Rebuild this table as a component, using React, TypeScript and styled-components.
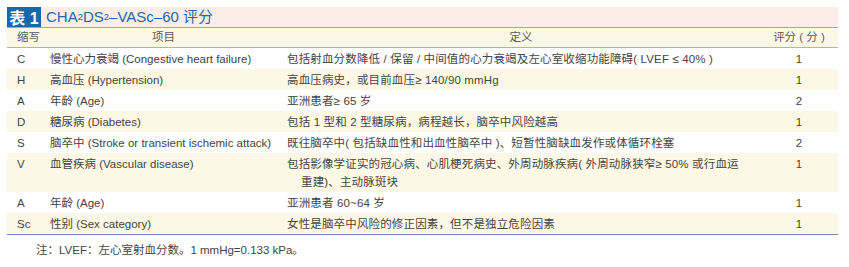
import React from "react";
import styled, { createGlobalStyle } from "styled-components";

const Global = createGlobalStyle`
  html, body { margin: 0; padding: 0; background: #ffffff; }
  body { font-family: "Liberation Sans", "Noto Sans CJK SC", sans-serif; }
`;

const Page = styled.div`
  padding: 7px 11px 0 7px;
  width: 831px;
`;

const TitleBar = styled.div`
  display: flex;
  align-items: stretch;
  height: 20px;
  background: #fcede6;
  border-bottom: 1px solid #9aa6c4;
`;

const TitleTag = styled.div`
  display: flex;
  align-items: center;
  justify-content: center;
  width: 34px;
  background: #1769ad;
  color: #ffffff;
  font-weight: bold;
  font-size: 16px;
  font-family: "Liberation Sans", "Noto Sans CJK SC", sans-serif;
`;

const TitleText = styled.div`
  display: flex;
  align-items: center;
  padding-left: 5px;
  color: #1769ad;
  font-size: 15px;
  line-height: 20px;
  sub {
    font-size: 9.5px;
    vertical-align: -4px;
    line-height: 0;
  }
`;

const COLS = "38px 237px 478px 78px";

const HeaderRow = styled.div`
  display: grid;
  grid-template-columns: ${COLS};
  height: 19px;
  background: #fdf8e6;
  border-bottom: 1px solid #a9b2cc;
  color: #5a5a5a;
  font-size: 11.5px;
  line-height: 19px;
`;

const HeadCell = styled.div<{ $center?: boolean }>`
  text-align: ${(p) => (p.$center ? "center" : "left")};
  padding-left: ${(p) => (p.$center ? "0" : "10px")};
`;

const Body = styled.div`
  border-bottom: 1px solid #7085bb;
`;

const Row = styled.div<{ $shade?: boolean }>`
  display: grid;
  grid-template-columns: ${COLS};
  background: ${(p) => (p.$shade ? "#fdf8e6" : "#ffffff")};
  color: #444444;
  font-size: 11.5px;
  line-height: 18px;
  padding: 2px 0 1px;
`;

const Abbr = styled.div`
  padding-left: 10px;
`;

const Item = styled.div`
  padding-left: 5px;
  white-space: nowrap;
`;

const Def = styled.div`
  padding-left: 5px;
  padding-right: 20px;
`;

const DefLine = styled.div<{ $indent?: boolean }>`
  padding-left: ${(p) => (p.$indent ? "14px" : "0")};
  white-space: nowrap;
  letter-spacing: 0.15px;
`;

const Score = styled.div`
  text-align: center;
`;

const Note = styled.div`
  padding: 6px 0 0 29px;
  color: #444444;
  font-size: 11.5px;
  line-height: 18px;
`;

type R = { a: string; item: string; def: string[]; score: string };

const rows: R[] = [
  {
    a: "C",
    item: "慢性心力衰竭 (Congestive heart failure)",
    def: ["包括射血分数降低 / 保留 / 中间值的心力衰竭及左心室收缩功能障碍( LVEF ≤ 40% )"],
    score: "1",
  },
  { a: "H", item: "高血压 (Hypertension)", def: ["高血压病史，或目前血压≥ 140/90 mmHg"], score: "1" },
  { a: "A", item: "年龄 (Age)", def: ["亚洲患者≥ 65 岁"], score: "2" },
  { a: "D", item: "糖尿病 (Diabetes)", def: ["包括 1 型和 2 型糖尿病，病程越长，脑卒中风险越高"], score: "1" },
  {
    a: "S",
    item: "脑卒中 (Stroke or transient ischemic attack)",
    def: ["既往脑卒中( 包括缺血性和出血性脑卒中 )、短暂性脑缺血发作或体循环栓塞"],
    score: "2",
  },
  {
    a: "V",
    item: "血管疾病 (Vascular disease)",
    def: ["包括影像学证实的冠心病、心肌梗死病史、外周动脉疾病( 外周动脉狭窄≥ 50% 或行血运", "重建)、主动脉斑块"],
    score: "1",
  },
  { a: "A", item: "年龄 (Age)", def: ["亚洲患者 60~64 岁"], score: "1" },
  { a: "Sc", item: "性别 (Sex category)", def: ["女性是脑卒中风险的修正因素，但不是独立危险因素"], score: "1" },
];

export default function App() {
  return (
    <>
      <Global />
      <Page>
        <TitleBar>
          <TitleTag>表 1</TitleTag>
          <TitleText>
            CHA<sub>2</sub>DS<sub>2</sub>–VASc–60 评分
          </TitleText>
        </TitleBar>
        <HeaderRow>
          <HeadCell>缩写</HeadCell>
          <HeadCell $center>项目</HeadCell>
          <HeadCell $center>定义</HeadCell>
          <HeadCell $center>评分 ( 分 )</HeadCell>
        </HeaderRow>
        <Body>
          {rows.map((r, i) => (
            <Row key={i} $shade={i % 2 === 1}>
              <Abbr>{r.a}</Abbr>
              <Item>{r.item}</Item>
              <Def>
                {r.def.map((d, j) => (
                  <DefLine key={j} $indent={j > 0}>
                    {d}
                  </DefLine>
                ))}
              </Def>
              <Score>{r.score}</Score>
            </Row>
          ))}
        </Body>
        <Note>注：LVEF：左心室射血分数。1 mmHg=0.133 kPa。</Note>
      </Page>
    </>
  );
}
